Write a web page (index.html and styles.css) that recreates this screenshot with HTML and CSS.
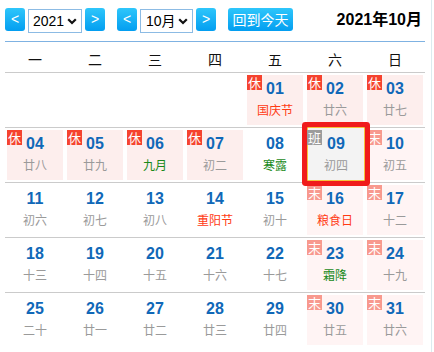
FILE: index.html
```html
<!DOCTYPE html>
<html lang="zh-CN">
<head>
<meta charset="utf-8">
<title>万年历</title>
<link rel="stylesheet" href="styles.css">
</head>
<body>
<div class="cal">
  <div class="bar">
    <button class="nav">&lt;</button>
    <span class="sel sel-year"><select><option>2021</option></select><svg class="chev" width="10" height="7" viewBox="0 0 10 7"><path d="M1.2 1.2 L5 5 L8.8 1.2" fill="none" stroke="#111" stroke-width="2.2"/></svg></span>
    <button class="nav">&gt;</button>
    <button class="nav nav-gap">&lt;</button>
    <span class="sel sel-month"><select><option>10月</option></select><svg class="chev" width="10" height="7" viewBox="0 0 10 7"><path d="M1.2 1.2 L5 5 L8.8 1.2" fill="none" stroke="#111" stroke-width="2.2"/></svg></span>
    <button class="nav">&gt;</button>
    <button class="today">回到今天</button>
    <div class="title">2021年10月</div>
  </div>
  <div class="week">
    <span>一</span><span>二</span><span>三</span><span>四</span><span>五</span><span>六</span><span>日</span>
  </div>
  <div class="row">
    <div class="cell"></div><div class="cell"></div><div class="cell"></div><div class="cell"></div>
    <div class="cell xiu"><i class="tag">休</i><div class="num">01</div><div class="lunar fest">国庆节</div></div>
    <div class="cell xiu"><i class="tag">休</i><div class="num">02</div><div class="lunar">廿六</div></div>
    <div class="cell xiu"><i class="tag">休</i><div class="num">03</div><div class="lunar">廿七</div></div>
  </div>
  <div class="row">
    <div class="cell xiu"><i class="tag">休</i><div class="num">04</div><div class="lunar">廿八</div></div>
    <div class="cell xiu"><i class="tag">休</i><div class="num">05</div><div class="lunar">廿九</div></div>
    <div class="cell xiu"><i class="tag">休</i><div class="num">06</div><div class="lunar term">九月</div></div>
    <div class="cell xiu"><i class="tag">休</i><div class="num">07</div><div class="lunar">初二</div></div>
    <div class="cell"><div class="num">08</div><div class="lunar term">寒露</div></div>
    <div class="cell today-cell"><i class="tag tag-ban">班</i><div class="num">09</div><div class="lunar">初四</div></div>
    <div class="cell mo"><i class="tag tag-mo">末</i><div class="num">10</div><div class="lunar">初五</div></div>
  </div>
  <div class="row">
    <div class="cell"><div class="num">11</div><div class="lunar">初六</div></div>
    <div class="cell"><div class="num">12</div><div class="lunar">初七</div></div>
    <div class="cell"><div class="num">13</div><div class="lunar">初八</div></div>
    <div class="cell"><div class="num">14</div><div class="lunar fest">重阳节</div></div>
    <div class="cell"><div class="num">15</div><div class="lunar">初十</div></div>
    <div class="cell mo"><i class="tag tag-mo">末</i><div class="num">16</div><div class="lunar fest">粮食日</div></div>
    <div class="cell mo"><i class="tag tag-mo">末</i><div class="num">17</div><div class="lunar">十二</div></div>
  </div>
  <div class="row">
    <div class="cell"><div class="num">18</div><div class="lunar">十三</div></div>
    <div class="cell"><div class="num">19</div><div class="lunar">十四</div></div>
    <div class="cell"><div class="num">20</div><div class="lunar">十五</div></div>
    <div class="cell"><div class="num">21</div><div class="lunar">十六</div></div>
    <div class="cell"><div class="num">22</div><div class="lunar">十七</div></div>
    <div class="cell mo"><i class="tag tag-mo">末</i><div class="num">23</div><div class="lunar term">霜降</div></div>
    <div class="cell mo"><i class="tag tag-mo">末</i><div class="num">24</div><div class="lunar">十九</div></div>
  </div>
  <div class="row">
    <div class="cell"><div class="num">25</div><div class="lunar">二十</div></div>
    <div class="cell"><div class="num">26</div><div class="lunar">廿一</div></div>
    <div class="cell"><div class="num">27</div><div class="lunar">廿二</div></div>
    <div class="cell"><div class="num">28</div><div class="lunar">廿三</div></div>
    <div class="cell"><div class="num">29</div><div class="lunar">廿四</div></div>
    <div class="cell mo"><i class="tag tag-mo">末</i><div class="num">30</div><div class="lunar">廿五</div></div>
    <div class="cell mo"><i class="tag tag-mo">末</i><div class="num">31</div><div class="lunar">廿六</div></div>
  </div>
</div>
</body>
</html>
```
FILE: styles.css
```css
html, body {
  margin: 0;
  padding: 0;
  background: #fff;
}
body {
  font-family: "Liberation Sans", "Noto Sans CJK SC", sans-serif;
}
.cal {
  width: 432px;
  height: 352px;
  box-sizing: border-box;
  padding: 0 6px 0 5px;
  border-right: 1px solid #dcebef;
}
.bar {
  height: 42px;
  box-sizing: border-box;
  padding-top: 8px;
  border-bottom: 1px solid #7fb2e2;
  display: flex;
  align-items: flex-start;
}
.nav {
  width: 20px;
  height: 23px;
  padding: 0;
  margin: 0;
  border: 0;
  border-radius: 3px;
  background: linear-gradient(#2ec6fb, #039ef0);
  color: #fff;
  font: 14px/23px "Liberation Sans", sans-serif;
}
.nav-gap {
  margin-left: 12px;
}
.sel {
  position: relative;
  margin: 1px 3px 0;
  height: 24px;
}
.sel-year { width: 54px; }
.sel-month { width: 53px; }
.sel select {
  -webkit-appearance: none;
  appearance: none;
  width: 100%;
  height: 100%;
  margin: 0;
  box-sizing: border-box;
  border: 1px solid #8cbbe4;
  border-radius: 0;
  background: #fff;
  color: #000;
  padding: 0 0 0 4px;
  font: 14px "Liberation Sans", "Noto Sans CJK SC", sans-serif;
}
.sel-month select {
  padding-left: 5px;
}
.chev {
  position: absolute;
  right: 5px;
  top: 9px;
  pointer-events: none;
}
.today {
  margin-left: 12px;
  width: 65px;
  height: 23px;
  padding: 0;
  border: 0;
  border-radius: 3px;
  background: linear-gradient(#2ec6fb, #039ef0);
  color: #fff;
  font: 14px/23px "Noto Sans CJK SC", sans-serif;
}
.title {
  margin-left: auto;
  margin-right: 3px;
  font: bold 16px/23px "Liberation Sans", "Noto Sans CJK SC", sans-serif;
  color: #000;
}
.week {
  display: grid;
  grid-template-columns: repeat(7, 60px);
  height: 31px;
  box-sizing: border-box;
  border-bottom: 1px solid #cbcbcb;
}
.week span {
  text-align: center;
  padding-top: 4px;
  font: 14px/26px "Noto Sans CJK SC", sans-serif;
  color: #111;
}
.row {
  display: grid;
  grid-template-columns: repeat(7, 60px);
  align-items: start;
}
.row + .row {
  border-top: 1px solid #cbcbcb;
}
.cell {
  position: relative;
  margin: 2px;
  height: 50px;
  box-sizing: border-box;
  padding-top: 3px;
  text-align: center;
}
.xiu { background: #fdeeed; }
.mo { background: #fff4f4; }
.num {
  font: bold 16px/22px "Liberation Sans", sans-serif;
  color: #1068b8;
}
.lunar {
  font: 12px/20px "Noto Sans CJK SC", sans-serif;
  color: #9a9a9a;
}
.lunar.fest { color: #ff3a14; }
.lunar.term { color: #1a8a1a; }
.tag {
  position: absolute;
  left: 0;
  top: 0;
  width: 15px;
  height: 15px;
  background: #f5432f;
  color: #fff;
  font: normal 13px/15px "Noto Sans CJK SC", sans-serif;
  text-align: center;
}
.tag-mo { background: #f8998e; }
.tag-ban { background: #9c9c9c; left: -1px; top: 2px; }
.today-cell {
  z-index: 1;
  margin: -1px 0 0 2px;
  width: 58px;
  height: 54px;
  padding-top: 5px;
  border: 1px solid #f6c23c;
  border-radius: 1px;
  background: #f3f3f3;
  box-shadow: 0 0 0 5px #f01b1b;
}
```
